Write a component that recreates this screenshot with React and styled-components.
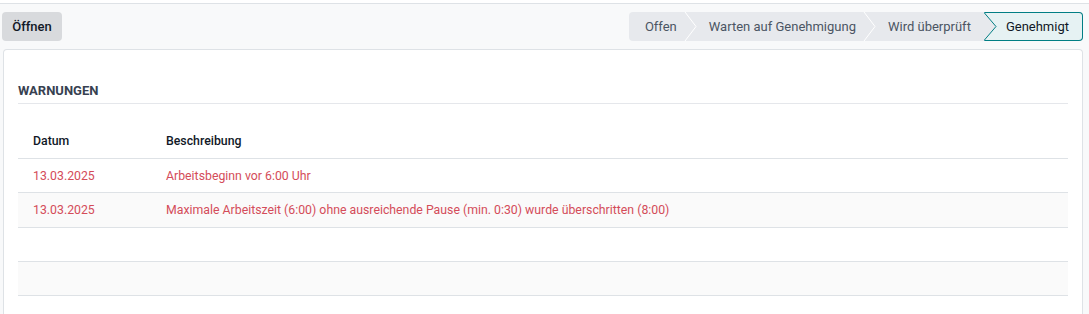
import React from 'react';
import styled, { createGlobalStyle } from 'styled-components';

const GlobalStyle = createGlobalStyle`
  html, body {
    margin: 0;
    padding: 0;
    background: #ffffff;
  }
  body {
    font-family: Roboto, "Noto Sans", sans-serif;
    color: #1f2937;
    -webkit-font-smoothing: antialiased;
  }
`;

const Wrapper = styled.div`
  padding-top: 3px;
  background: #ffffff;
  height: 311px;
  overflow: hidden;
`;

const Content = styled.div`
  border-top: 1px solid #dee2e6;
  background: #f8f9fa;
  height: 100%;
`;

const ControlPanel = styled.div`
  display: flex;
  justify-content: space-between;
  align-items: center;
  padding: 8px 6px 8px 2px;
`;

const Button = styled.button`
  height: 29px;
  width: 60px;
  padding: 0;
  border: none;
  border-radius: 4px;
  background: #d8dadd;
  color: #111827;
  font-family: inherit;
  font-size: 13px;
  font-weight: 500;
  cursor: pointer;
`;

const StatusBar = styled.div`
  display: flex;
  height: 29px;
  background: #e7e9ed;
  border-radius: 4px;
`;

const Step = styled.div`
  position: relative;
  display: flex;
  align-items: center;
  padding: 0 13px 0 16px;
  font-size: 13px;
  color: ${p => (p.$active ? '#111827' : '#4b5563')};
  background: ${p => (p.$active ? '#e6f2f3' : 'transparent')};
  border: ${p => (p.$active ? '1px solid #017e84' : 'none')};
  border-left: none;
  border-radius: ${p => (p.$active ? '0 4px 4px 0' : '0')};
  white-space: nowrap;
`;

const Separator = styled.svg`
  flex: none;
  width: 13px;
  height: 29px;
  margin: 0 -4px 0 -6px;
`;

const Notch = styled.svg`
  position: absolute;
  left: 0;
  top: -1px;
  width: 13px;
  height: 29px;
`;

const Sheet = styled.div`
  margin: 0 6px 0 3px;
  background: #ffffff;
  border: 1px solid #dee2e6;
  border-bottom: none;
  border-radius: 4px 4px 0 0;
  padding: 32px 14px 0 14px;
  height: 300px;
`;

const SectionTitle = styled.div`
  font-size: 13px;
  line-height: 18px;
  font-weight: 700;
  color: #374151;
  text-transform: uppercase;
  padding-bottom: 3px;
  border-bottom: 1px solid #e5e7eb;
`;

const Table = styled.table`
  width: 100%;
  margin-top: 20px;
  border-collapse: collapse;
  table-layout: fixed;
  font-size: 12.3px;
`;

const HeadCell = styled.th`
  height: 34px;
  padding: 0 15px;
  text-align: left;
  font-weight: 500;
  color: #111827;
  border-bottom: 1px solid #dee2e6;
  width: ${p => p.$width || 'auto'};
`;

const Row = styled.tr`
  height: ${p => p.$h || 34}px;
  background: ${p => (p.$striped ? '#fafafa' : '#ffffff')};
  & > td {
    border-bottom: 1px solid #dee2e6;
  }
`;

const Cell = styled.td`
  padding: 0 15px;
  color: #d44c59;
  white-space: nowrap;
`;

const steps = ['Offen', 'Warten auf Genehmigung', 'Wird überprüft', 'Genehmigt'];

const warnings = [
  { date: '13.03.2025', text: 'Arbeitsbeginn vor 6:00 Uhr' },
  { date: '13.03.2025', text: 'Maximale Arbeitszeit (6:00) ohne ausreichende Pause (min. 0:30) wurde überschritten (8:00)' },
  null,
  null,
];

const Chevron = () => (
  <Separator viewBox="0 0 13 29">
    <polyline points="1,0 12,14.5 1,29" fill="none" stroke="#ffffff" strokeWidth="1" />
  </Separator>
);

const App = () => {
  const active = steps.length - 1;
  return (
    <>
      <GlobalStyle />
      <Wrapper>
        <Content>
          <ControlPanel>
            <Button>Öffnen</Button>
            <StatusBar>
              {steps.map((s, i) => (
                <React.Fragment key={s}>
                  {i > 0 && i !== active && <Chevron />}
                  {i === active ? (
                    <Step $active>
                      <Notch viewBox="0 0 13 29">
                        <polygon points="0,0 12,14.5 0,29" fill="#e7e9ed" />
                        <polyline points="0,0.5 12,14.5 0,28.5" fill="none" stroke="#017e84" strokeWidth="1" />
                      </Notch>
                      <span style={{ paddingLeft: 6 }}>{s}</span>
                    </Step>
                  ) : (
                    <Step>{s}</Step>
                  )}
                </React.Fragment>
              ))}
            </StatusBar>
          </ControlPanel>
          <Sheet>
            <SectionTitle>Warnungen</SectionTitle>
            <Table>
              <thead>
                <tr>
                  <HeadCell $width="103px">Datum</HeadCell>
                  <HeadCell>Beschreibung</HeadCell>
                </tr>
              </thead>
              <tbody>
                {warnings.map((w, i) => (
                  <Row key={i} $striped={i % 2 === 1} $h={i === 1 ? 35 : 34}>
                    <Cell>{w ? w.date : ''}</Cell>
                    <Cell>{w ? w.text : ''}</Cell>
                  </Row>
                ))}
              </tbody>
            </Table>
          </Sheet>
        </Content>
      </Wrapper>
    </>
  );
};

export default App;
